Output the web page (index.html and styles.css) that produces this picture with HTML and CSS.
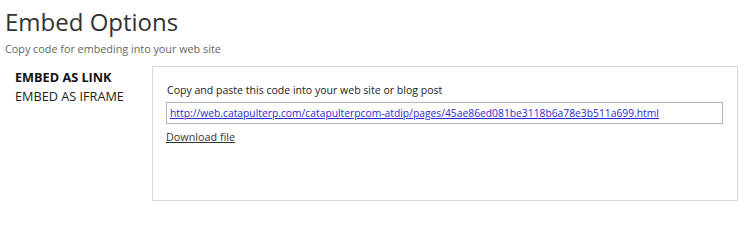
FILE: index.html
```html
<!DOCTYPE html>
<html>
<head>
<meta charset="utf-8">
<link rel="stylesheet" href="styles.css">
</head>
<body>
<div class="page">
  <h1 class="title">Embed Options</h1>
  <p class="subtitle">Copy code for embeding into your web site</p>
  <div class="main">
    <ul class="menu">
      <li class="menu-item active">EMBED AS LINK</li>
      <li class="menu-item">EMBED AS IFRAME</li>
    </ul>
    <div class="panel">
      <p class="hint">Copy and paste this code into your web site or blog post</p>
      <div class="code-box"><a class="code-link" href="#">http://web.catapulterp.com/catapulterpcom-atdip/pages/45ae86ed081be3118b6a78e3b511a699.html</a></div>
      <a class="download" href="#">Download file</a>
    </div>
  </div>
</div>
</body>
</html>
```
FILE: styles.css
```css
html, body {
  margin: 0;
  padding: 0;
  background: #fff;
}
body {
  font-family: "Open Sans", "Noto Sans", sans-serif;
  color: #333;
}
.page {
  padding: 6px 0 0 5px;
}
.title {
  margin: 0;
  font-size: 24px;
  font-weight: 400;
  line-height: 32px;
  color: #333;
}
.subtitle {
  margin: 4px 0 0 0;
  font-size: 10.8px;
  line-height: 14px;
  color: #666;
}
.main {
  display: flex;
  margin-top: 10px;
}
.menu {
  list-style: none;
  margin: 0;
  padding: 2px 0 0 10px;
  width: 137px;
}
.menu-item {
  font-size: 12.7px;
  line-height: 19px;
  color: #222;
}
.menu-item.active {
  font-weight: 700;
  color: #111;
}
.panel {
  width: 558px;
  height: 133px;
  border: 1px solid #d9d9d9;
  padding: 0 13px;
}
.hint {
  margin: 16px 0 0 1px;
  font-size: 10.55px;
  line-height: 14px;
  color: #222;
}
.code-box {
  margin-top: 5px;
  height: 20px;
  border: 1px solid #b4b4b4;
  padding: 0 3px;
  display: flex;
  align-items: center;
  width: 549px;
}
.code-link {
  font-size: 10.3px;
  color: #2b2bd6;
  text-decoration: underline;
  white-space: nowrap;
}
.download {
  display: inline-block;
  margin-top: 5px;
  font-size: 10.8px;
  line-height: 16px;
  color: #333;
  text-decoration: underline;
}
```
